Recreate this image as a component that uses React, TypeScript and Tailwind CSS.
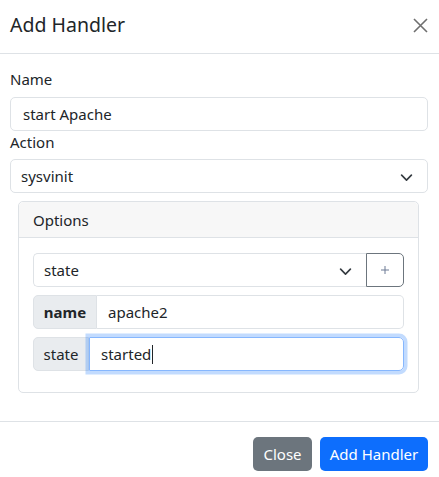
const font = { fontFamily: '"Noto Sans", "Open Sans", sans-serif' }

function Chevron() {
  return (
    <svg width="13" height="10" viewBox="0 0 16 12" className="shrink-0">
      <path d="m2 5 6 6 6-6" fill="none" stroke="#343a40" strokeWidth="2" strokeLinecap="round" strokeLinejoin="round" />
    </svg>
  )
}

function SelectBox({ value, className }: { value: string; className: string }) {
  return (
    <div className={`flex h-[34px] items-center justify-between border border-[#dee2e6] bg-white pl-[10px] pr-[14px] text-[#212529] ${className}`}>
      <span>{value}</span>
      <Chevron />
    </div>
  )
}

export default function App() {
  return (
    <div className="w-[439px] h-[477px] overflow-hidden bg-white text-[15px] leading-[22px] text-[#212529]" style={font}>
      {/* header */}
      <div className="flex h-[54px] items-start justify-between border-b border-[#dee2e6] pl-[10px] pr-[11px] pt-[10px]">
        <h5 className="text-[19.5px] leading-[30px]">Add Handler</h5>
        <button className="mt-[8px] h-[15px] w-[15px]">
          <svg width="15" height="15" viewBox="0 0 15 15">
            <path d="M1 1 14 14M14 1 1 14" stroke="#6f6f6f" strokeWidth="1.6" />
          </svg>
        </button>
      </div>

      {/* body */}
      <div className="pl-[10px] pr-[11px] pt-[14px]">
        <label className="mb-[7px] block">Name</label>
        <div className="flex h-[34px] items-center rounded-[5px] border border-[#dee2e6] px-[12px]">start Apache</div>
        <label className="mb-[6px] block">Action</label>
        <SelectBox value="sysvinit" className="rounded-[5px]" />

        <div className="ml-[8px] mr-[9px] mt-[8px] rounded-[5px] border border-[#dee2e6]">
          <div className="flex h-[36px] items-center border-b border-[#dee2e6] bg-[#f7f7f7] px-[14px] rounded-t-[5px]">Options</div>
          <div className="px-[14px] pt-[15px] pb-[13px]">
            <div className="mb-[8px] flex">
              <SelectBox value="state" className="flex-1 rounded-l-[5px] border-r-0" />
              <button className="flex h-[34px] w-[38px] items-center justify-center rounded-r-[5px] border border-[#6c757d] text-[#6c757d]">
                <svg width="10" height="10" viewBox="0 0 10 10">
                  <path d="M5 1v8M1 5h8" stroke="#6c7a95" strokeWidth="1" />
                </svg>
              </button>
            </div>
            <div className="mb-[8px] flex h-[34px]">
              <div className="flex w-[64px] items-center justify-center rounded-l-[5px] border border-[#dee2e6] bg-[#e9ecef] font-bold">name</div>
              <div className="flex flex-1 items-center rounded-r-[5px] border border-l-0 border-[#dee2e6] px-[11px]">apache2</div>
            </div>
            <div className="mb-[8px] flex h-[34px]">
              <div className="flex w-[56px] items-center justify-center rounded-l-[5px] border border-[#dee2e6] bg-[#e9ecef]">state</div>
              <div className="flex flex-1 items-center rounded-r-[5px] border border-[#86b7fe] px-[11px] shadow-[0_0_0_3.5px_rgba(13,110,253,0.25)]">
                started<span className="ml-[1px] inline-block h-[19px] w-[1px] bg-[#212529]" />
              </div>
            </div>
          </div>
        </div>
      </div>

      {/* footer */}
      <div className="mt-[28px] flex justify-end gap-[8px] border-t border-[#dee2e6] pr-[11px] pt-[15px]">
        <button className="h-[34px] w-[59px] rounded-[5px] bg-[#6c757d] text-white">Close</button>
        <button className="h-[34px] w-[108px] rounded-[5px] bg-[#0d6efd] text-white">Add Handler</button>
      </div>
    </div>
  )
}
